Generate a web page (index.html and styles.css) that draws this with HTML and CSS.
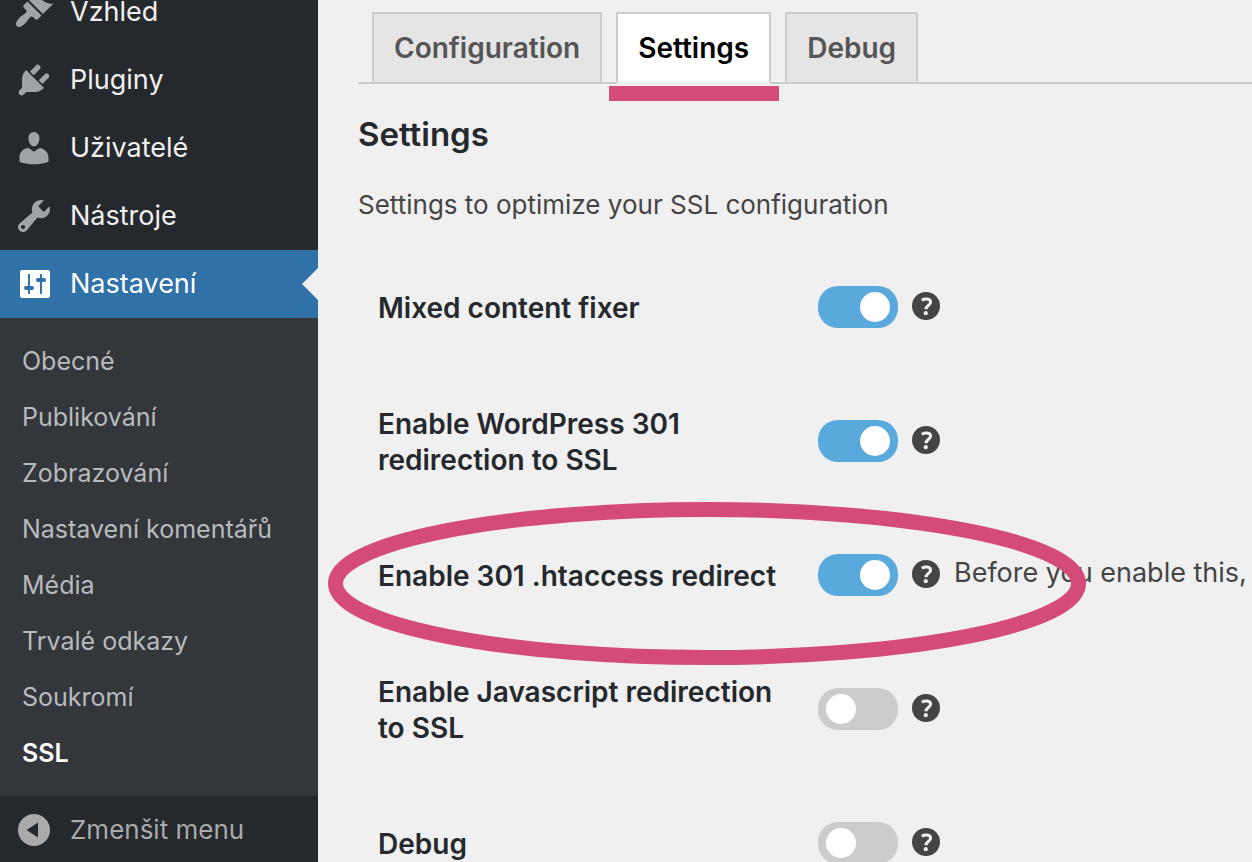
FILE: index.html
```html
<!DOCTYPE html>
<html lang="cs">
<head>
<meta charset="utf-8">
<meta name="viewport" content="width=device-width, initial-scale=1">
<title>Settings – SSL</title>
<link rel="stylesheet" href="styles.css">
</head>
<body>
<div class="app">
  <nav class="sidebar" aria-label="Menu">
    <ul class="menu">
      <li><a class="menu-item" href="#"><svg class="icon" viewBox="0 0 20 20" aria-hidden="true"><path d="M14.48 11.06L7.41 3.99l1.5-1.5c.5-.56 2.3-.47 3.51.32 1.21.8 1.43 1.28 2.91 2.1 1.18.64 2.45 1.26 4.45.85zm-.71.71L6.7 4.7 4.93 6.47c-.39.39-.39 1.02 0 1.41l1.06 1.06c.39.39.39 1.03 0 1.42-.6.6-1.43 1.11-2.21 1.69-.35.26-.7.53-1.01.84C1.43 14.23.4 16.08 1.4 17.07c.99 1 2.84-.03 4.18-1.36.31-.31.58-.66.85-1.02.57-.78 1.08-1.61 1.69-2.21.39-.39 1.02-.39 1.41 0l1.06 1.06c.39.39 1.02.39 1.41 0z"/></svg>Vzhled</a></li>
      <li><a class="menu-item" href="#"><svg class="icon" viewBox="0 0 20 20" aria-hidden="true"><path d="M13.11 4.36L9.87 7.6 8 5.73l3.24-3.24c.35-.34 1.05-.2 1.56.32.52.51.66 1.21.31 1.55zm-8 1.77l.91-1.12 9.01 9.01-1.19.84c-.71.71-2.63 1.16-3.82 1.16H6.14L4.9 17.26c-.59.59-1.54.59-2.12 0-.59-.58-.59-1.53 0-2.12l1.24-1.24v-3.88c0-1.13.4-3.19 1.09-3.89zm7.26 3.97l3.24-3.24c.34-.35 1.04-.21 1.55.31.52.51.66 1.21.31 1.55l-3.24 3.25z"/></svg>Pluginy</a></li>
      <li><a class="menu-item" href="#"><svg class="icon" viewBox="0 0 20 20" aria-hidden="true"><path d="M10 9.25c-2.27 0-2.73-3.44-2.73-3.44C7 4.02 7.82 2 9.97 2c2.16 0 2.98 2.02 2.71 3.81 0 0-.41 3.44-2.68 3.44zm0 2.57L12.72 10c2.39 0 4.52 2.33 4.52 4.53v2.49s-3.65 1.13-7.24 1.13c-3.65 0-7.24-1.13-7.24-1.13v-2.49c0-2.25 1.94-4.48 4.47-4.48z"/></svg>Uživatelé</a></li>
      <li><a class="menu-item" href="#"><svg class="icon" viewBox="0 0 20 20" aria-hidden="true"><path d="M16.68 9.77c-1.34 1.34-3.3 1.67-4.95.99l-5.41 6.52c-.99.99-2.59.99-3.58 0s-.99-2.59 0-3.57l6.52-5.42c-.68-1.65-.35-3.61.99-4.95 1.28-1.28 3.12-1.62 4.72-1.06l-2.89 2.89 2.82 2.82 2.86-2.87c.53 1.58.18 3.39-1.08 4.65zM3.81 16.21c.4.39 1.04.39 1.43 0 .4-.4.4-1.04 0-1.43-.39-.4-1.03-.4-1.43 0-.39.39-.39 1.03 0 1.43z"/></svg>Nástroje</a></li>
      <li><a class="menu-item menu-item-current" href="#"><svg class="icon" viewBox="0 0 20 20" aria-hidden="true"><path d="M18 16V4c0-.55-.45-1-1-1H4c-.55 0-1 .45-1 1v12c0 .55.45 1 1 1h13c.55 0 1-.45 1-1zM8 11h1c.55 0 1 .45 1 1s-.45 1-1 1H8v1.5c0 .28-.22.5-.5.5s-.5-.22-.5-.5V13H6c-.55 0-1-.45-1-1s.45-1 1-1h1V5.500c0-.28.22-.5.5-.5s.5.22.5.5V11zm5-2h-1c-.55 0-1-.45-1-1s.45-1 1-1h1V5.500c0-.28.22-.5.5-.5s.5.22.5.5V7h1c.55 0 1 .45 1 1s-.45 1-1 1h-1v5.500c0 .28-.22.5-.5.5s-.5-.22-.5-.5V9z"/></svg>Nastavení</a>
        <ul class="submenu">
          <li><a href="#">Obecné</a></li>
          <li><a href="#">Publikování</a></li>
          <li><a href="#">Zobrazování</a></li>
          <li><a href="#">Nastavení komentářů</a></li>
          <li><a href="#">Média</a></li>
          <li><a href="#">Trvalé odkazy</a></li>
          <li><a href="#">Soukromí</a></li>
          <li><a class="submenu-current" href="#" aria-current="page">SSL</a></li>
        </ul>
      </li>
    </ul>
    <button class="menu-item collapse" type="button"><svg class="icon" viewBox="0 0 40 40" aria-hidden="true"><path fill-rule="evenodd" d="M20 4a16 16 0 1 0 0 32a16 16 0 0 0 0-32zM24 12.500v15L12.500 20z"/></svg>Zmenšit menu</button>
  </nav>

  <main class="content">
    <nav class="tabs" aria-label="SSL">
      <a class="tab" href="#">Configuration</a>
      <a class="tab tab-active" href="#">Settings</a>
      <a class="tab" href="#">Debug</a>
    </nav>
    <h2 class="title">Settings</h2>
    <p class="intro">Settings to optimize your SSL configuration</p>

    <form>
      <table class="options">
        <tr>
          <th scope="row"><label for="mixed">Mixed content fixer</label></th>
          <td><div class="field"><input class="switch" type="checkbox" id="mixed" checked><button class="help" type="button" aria-label="Help"><svg viewBox="0 0 28 28"><use href="#help-mark"/></svg></button></div></td>
        </tr>
        <tr>
          <th scope="row"><label for="wp301">Enable WordPress 301 redirection to SSL</label></th>
          <td><div class="field"><input class="switch" type="checkbox" id="wp301" checked><button class="help" type="button" aria-label="Help"><svg viewBox="0 0 28 28"><use href="#help-mark"/></svg></button></div></td>
        </tr>
        <tr class="marked">
          <th scope="row"><label for="htaccess">Enable 301 .htaccess redirect</label>
            <svg class="ring" viewBox="0 0 758 163" aria-hidden="true"><ellipse cx="379" cy="81.500" rx="371.500" ry="74"/></svg></th>
          <td><div class="field"><input class="switch" type="checkbox" id="htaccess" checked><button class="help" type="button" aria-label="Help"><svg viewBox="0 0 28 28"><use href="#help-mark"/></svg></button><span class="note">Before you enable this,</span></div></td>
        </tr>
        <tr>
          <th scope="row"><label for="js">Enable Javascript redirection to SSL</label></th>
          <td><div class="field"><input class="switch" type="checkbox" id="js"><button class="help" type="button" aria-label="Help"><svg viewBox="0 0 28 28"><use href="#help-mark"/></svg></button></div></td>
        </tr>
        <tr>
          <th scope="row"><label for="debug">Debug</label></th>
          <td><div class="field"><input class="switch" type="checkbox" id="debug"><button class="help" type="button" aria-label="Help"><svg viewBox="0 0 28 28"><use href="#help-mark"/></svg></button></div></td>
        </tr>
      </table>
    </form>
  </main>
</div>
<svg class="defs" aria-hidden="true">
  <symbol id="help-mark" viewBox="0 0 28 28">
    <circle cx="14" cy="14" r="14" fill="#444"/>
    <path d="M9.800 8.300C12 6.900 18.600 5.900 18.600 10.200C18.600 13.300 14 13.200 14 17.300" fill="none" stroke="#f0f0f0" stroke-width="3"/>
    <circle cx="13.800" cy="21.200" r="2.100" fill="#f0f0f0"/>
  </symbol>
</svg>
</body>
</html>
```

FILE: styles.css
```css
* { box-sizing: border-box; }

body {
  margin: 0;
  height: 100vh;
  overflow: hidden;
  background: #f0f0f0;
  color: #444;
  font: 26px/36px Inter, "Liberation Sans", sans-serif;
}

a { color: inherit; text-decoration: none; }
ul { list-style: none; margin: 0; padding: 0; }
button { border: 0; padding: 0; background: none; font: inherit; cursor: pointer; }

.app { display: flex; min-height: 100vh; }

/* Sidebar */
.sidebar {
  flex: 0 0 318px;
  background: #25282c;
  color: #f0f0f0;
}
.menu { margin-top: -22px; }
.menu-item {
  display: flex;
  align-items: center;
  gap: 16px;
  width: 100%;
  height: 68px;
  padding-left: 14px;
  font-size: 27px;
  line-height: 68px;
}
.icon { flex: none; width: 40px; height: 40px; fill: #a0a4a9; }
.menu-item-current { position: relative; background: #3072a8; color: #fff; }
.menu-item-current .icon { fill: #fff; }
.menu-item-current::after {
  content: "";
  position: absolute;
  right: 0;
  top: 18px;
  border: 16px solid transparent;
  border-left: 0;
  border-right-color: #f0f0f0;
}
.submenu { padding: 15px 0; background: #33363b; color: #b8bbbe; font-size: 25px; }
.submenu a { display: block; padding-left: 22px; line-height: 56px; }
.submenu .submenu-current { color: #fff; font-weight: 600; }
.collapse { color: #a8aaac; font-size: 26px; }
.collapse .icon { fill: #aaa; }

/* Content */
.content { flex: 1; min-width: 0; padding: 12px 0 0 40px; }
.tabs {
  display: flex;
  gap: 14px;
  padding-left: 14px;
  border-bottom: 2px solid #ccc;
}
.tab {
  padding: 17px 20px;
  border: 2px solid #ccc;
  border-bottom: 0;
  background: #e5e5e5;
  color: #555;
  font-size: 28px;
  font-weight: 600;
  line-height: 34px;
}
.tab-active {
  position: relative;
  margin-bottom: -2px;
  border-bottom: 2px solid #f0f0f0;
  background: #fff;
  color: #000;
}
.tab-active::after {
  content: "";
  position: absolute;
  left: -9px;
  right: -10px;
  top: 72px;
  height: 15px;
  background: #d44b78;
}
.title {
  margin: 30px 0 0;
  color: #25282c;
  font-size: 33px;
  font-weight: 600;
  line-height: 40px;
}
.intro { margin: 33px 0 18px; font-size: 26px; line-height: 36px; }

.options { border-collapse: collapse; }
.options tr { height: 134px; }
.options th {
  width: 460px;
  padding: 0 40px 0 20px;
  color: #25282c;
  font-size: 28px;
  font-weight: 600;
  text-align: left;
  vertical-align: middle;
}
.options td { padding: 0 0 2px; vertical-align: middle; }
.field { display: flex; align-items: center; gap: 14px; }
.marked th { position: relative; }
.ring {
  position: absolute;
  z-index: 1;
  left: -30px;
  top: -7px;
  width: 758px;
  height: 163px;
  fill: none;
  stroke: #d44b78;
  stroke-width: 15px;
  pointer-events: none;
}

.switch {
  appearance: none;
  flex: none;
  width: 80px;
  height: 42px;
  margin: 0;
  padding: 6px 8px;
  border-radius: 20px;
  background: #ccc;
}
.switch::before {
  content: "";
  display: block;
  width: 30px;
  height: 30px;
  border-radius: 50%;
  background: #fff;
}
.switch:checked { background: #5aa9dd; }
.switch:checked::before { margin-left: 34px; }
.help { flex: none; width: 28px; height: 28px; margin-bottom: 2px; }
.help svg { display: block; width: 28px; height: 28px; }
.note { padding-bottom: 4px; white-space: nowrap; font-size: 27px; }
.defs { position: absolute; width: 0; height: 0; }
```
